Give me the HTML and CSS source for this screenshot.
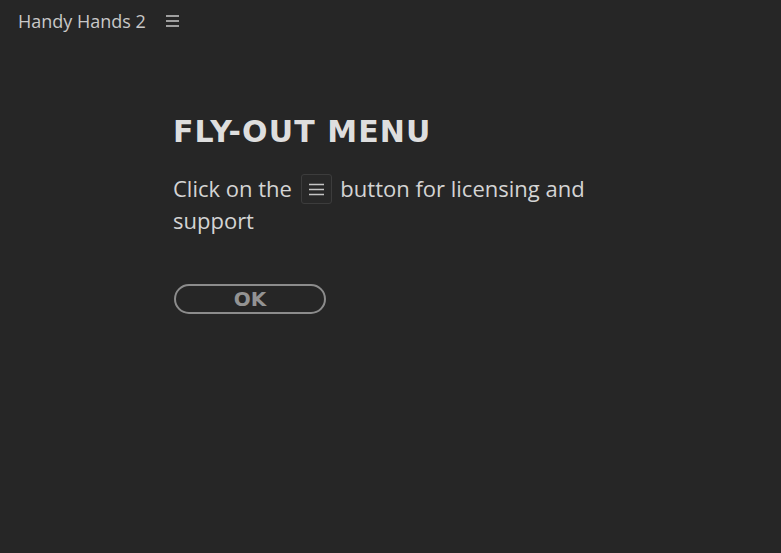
FILE: index.html
```html
<!DOCTYPE html>
<html>
<head>
<meta charset="utf-8">
<link rel="stylesheet" href="styles.css">
</head>
<body>
<header class="topbar">
  <span class="app-title">Handy Hands 2</span>
  <svg class="menu-icon" width="13" height="12" viewBox="0 0 13 12"><path d="M0 1h13M0 6h13M0 11h13" stroke="#c8c8c8" stroke-width="1.7"/></svg>
</header>
<main class="panel">
  <h1 class="title">FLY-OUT MENU</h1>
  <p class="msg">Click on the <span class="inline-btn"><svg width="15" height="13" viewBox="0 0 15 13"><path d="M0 1.5h15M0 6.5h15M0 11.5h15" stroke="#c4c4c4" stroke-width="1.6"/></svg></span> button for licensing and support</p>
  <button class="ok">OK</button>
</main>
</body>
</html>
```
FILE: styles.css
```css
html, body {
  margin: 0;
  height: 100%;
  background: #262626;
}
body {
  font-family: "Open Sans", "DejaVu Sans", sans-serif;
  color: #d2d2d2;
}
.topbar {
  display: flex;
  align-items: flex-start;
  gap: 20px;
  padding: 9px 0 0 18px;
  height: 24px;
}
.app-title {
  font-size: 18px;
  line-height: 24px;
  color: #c8c8c8;
}
.menu-icon { margin-top: 6px; }
.panel {
  padding: 81px 0 0 173px;
  width: 440px;
}
.title {
  margin: 0;
  font-family: "DejaVu Sans", sans-serif;
  font-weight: bold;
  font-size: 30px;
  line-height: 36px;
  color: #dedede;
  letter-spacing: 1.1px;
}
.msg {
  margin: 22px 0 0 0;
  font-size: 22px;
  line-height: 32px;
  color: #d4d4d4;
}
.inline-btn {
  display: inline-flex;
  align-items: center;
  justify-content: center;
  box-sizing: border-box;
  width: 31px;
  height: 30px;
  border: 1px solid #3c3c3c;
  border-radius: 3px;
  background: #282828;
  vertical-align: top;
  margin: 2px 3px 0 3px;
}
.ok {
  display: block;
  margin-top: 48px;
  margin-left: 1px;
  width: 152px;
  height: 30px;
  border: 2px solid #8c8c8c;
  border-radius: 15px;
  background: transparent;
  color: #939393;
  font-family: "DejaVu Sans", sans-serif;
  font-weight: bold;
  font-size: 20px;
  padding: 0;
  line-height: 26px;
}
```
